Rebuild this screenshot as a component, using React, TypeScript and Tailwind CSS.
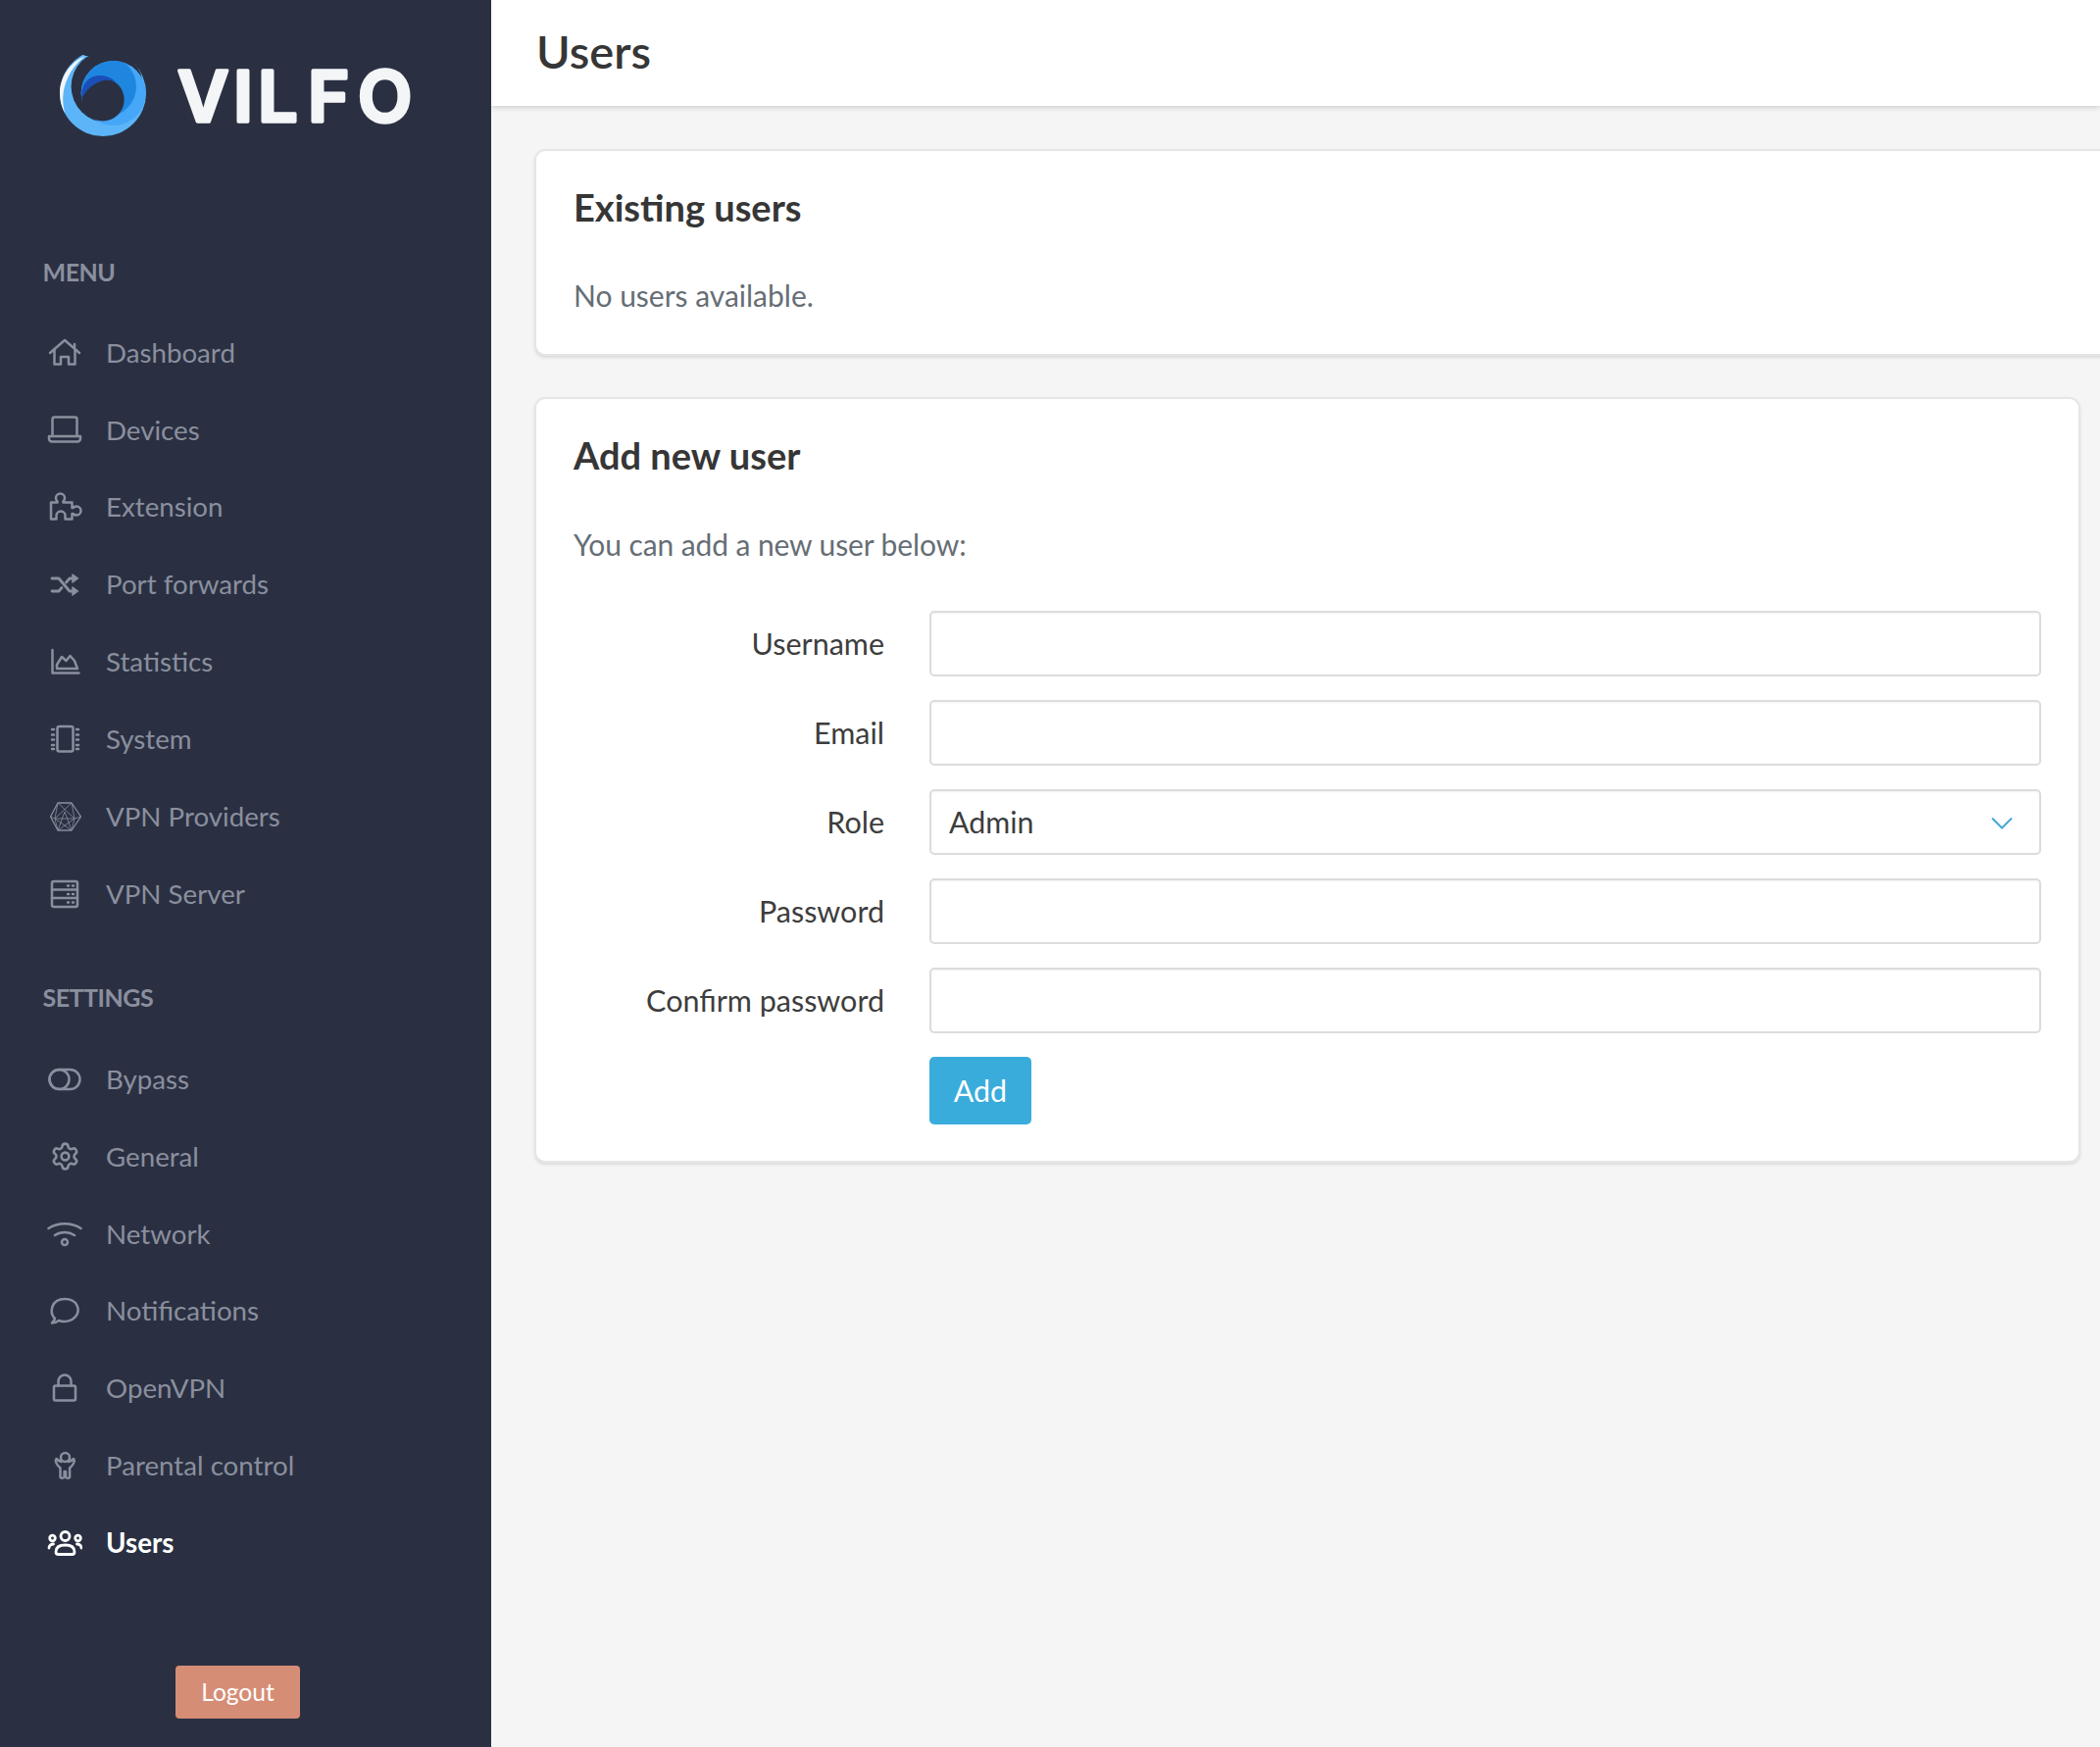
import { ReactNode } from 'react';
import { Settings } from 'lucide-react';

const stroke = {
  fill: 'none',
  stroke: 'currentColor',
  strokeWidth: 2.5,
  strokeLinecap: 'round' as const,
  strokeLinejoin: 'round' as const,
};

function Icon({ children }: { children: ReactNode }) {
  return (
    <svg viewBox="0 0 36 36" className="w-9 h-9 shrink-0" {...stroke}>
      {children}
    </svg>
  );
}

const icons: Record<string, ReactNode> = {
  Dashboard: (
    <Icon>
      <path d="M3 19 18 6l15 13" />
      <path d="M7.500 16v14.500h6.500v-7.500h8v7.500h6.500V16" />
      <path d="M28 10v4" />
    </Icon>
  ),
  Devices: (
    <Icon>
      <path d="M5.500 24V7.500a2 2 0 0 1 2-2h21a2 2 0 0 1 2 2V24" />
      <path d="M2 25h32v2.500a3 3 0 0 1-3 3H5a3 3 0 0 1-3-3z" />
    </Icon>
  ),
  Extension: (
    <Icon>
      <path d="M4 13.500h6.500v-1c-1-1-1.500-2-1.500-3.500a4.500 4.500 0 0 1 9 0c0 1.500-.5 2.500-1.500 3.500v1h9v5.500h1c1-1 2-1.500 3.500-1.500a4.500 4.500 0 0 1 0 9c-1.500 0-2.500-.5-3.500-1.500h-1v5.500H18.500v-3.500a4.500 4.500 0 0 0-9 0v3.500H4z" />
    </Icon>
  ),
  'Port forwards': (
    <Icon>
      <path d="M5 12h7l11 13h3" strokeWidth={2.8} />
      <path d="M5 25h7l3-3.500" strokeWidth={2.8} />
      <path d="M19.500 16l3.500-4h3" strokeWidth={2.8} />
      <path d="M26 8l5.500 4-5.500 4zM26 21l5.500 4-5.500 4z" fill="currentColor" strokeWidth={1.500} />
    </Icon>
  ),
  Statistics: (
    <Icon>
      <path d="M5.500 6v23.500h27" />
      <path d="M10 25v-4l5-8 4.500 4 4-5 4.500 5 3 8z" />
    </Icon>
  ),
  System: (
    <Icon>
      <rect x="10.500" y="5" width="16" height="25.500" rx="2" />
      <path d="M5 8h2M5 13.500h2M5 18.500h2M5 24h2M5 28h2M30 8h2M30 13.500h2M30 18.500h2M30 24h2M30 28h2" />
    </Icon>
  ),
  'VPN Providers': (
    <svg viewBox="0 0 36 36" className="w-9 h-9 shrink-0" fill="none" stroke="currentColor" strokeWidth={0.8} strokeLinejoin="round">
      <path strokeWidth={1.300} d="M11 4h14l9.500 14L25 32H11L3.500 18z" />
      <path d="M11 4 8 20l3 12M25 4l3 16-3 12M3.500 18 8 20l20 0 6.500-2M11 4l17 16L11 32M25 4 8 20l17 12M18 13l-7 19M18 13l7 19" />
    </svg>
  ),
  'VPN Server': (
    <Icon>
      <rect x="5" y="5" width="26" height="26" rx="2" />
      <path d="M5 13.500h26M5 22h26" />
      <path d="M21 9.500h1M26 9.500h1M21 18h1M26 18h1M21 26.500h1M26 26.500h1" />
    </Icon>
  ),
  Bypass: (
    <Icon>
      <rect x="2.500" y="8" width="31" height="20" rx="10" />
      <circle cx="12.500" cy="18" r="10" />
    </Icon>
  ),
  General: (
    <span className="w-9 h-9 shrink-0 flex items-center justify-center">
      <Settings size={31} strokeWidth={2} />
    </span>
  ),
  Network: (
    <Icon>
      <path d="M1.500 13c9.500-6.500 23.500-6.500 33 0" />
      <path d="M8 20c6-4 14-4 20 0" />
      <circle cx="18" cy="27" r="3" />
    </Icon>
  ),
  Notifications: (
    <Icon>
      <path d="M8 26C2 20 4 6 18 6c14 0 16 12 11 18-4 5-12 6-17 4-2 1.500-4 2.500-7 2.500 1.500-1.500 2.500-3 3-4.500z" />
    </Icon>
  ),
  OpenVPN: (
    <Icon>
      <rect x="7" y="15.500" width="22" height="15" rx="1.500" />
      <path d="M11.500 15.500V11a6.500 6.500 0 0 1 13 0v4.500" />
    </Icon>
  ),
  'Parental control': (
    <Icon>
      <circle cx="18.500" cy="9.500" r="4.500" />
      <path d="M14.500 14c-1.500-.5-3.500-1.500-5-3-1.500 2.500-1 5 4 9.500v9c0 1.500 3.800 1.500 4.100 0V24h1.400v5.500c.3 1.500 4.100 1.500 4.100 0v-9c5-4.500 5.500-7 4-9.500-1.500 1.500-3.500 2.500-5 3" />
    </Icon>
  ),
  Users: (
    <svg viewBox="0 0 36 36" className="w-9 h-9 shrink-0" fill="none" stroke="currentColor" strokeWidth={2.800} strokeLinecap="round" strokeLinejoin="round">
      <circle cx="18.500" cy="11" r="4.500" />
      <circle cx="5.500" cy="13" r="2.800" />
      <circle cx="31.500" cy="13" r="2.800" />
      <path d="M9 27c0-4.500 3-7 9.500-7s9.500 2.500 9.500 7c0 1.800-1 2.500-2.500 2.500h-14C10 29.500 9 28.800 9 27z" />
      <path d="M2 23c0-2.500 2-4 4.500-4M35 23c0-2.500-2-4-4.500-4" />
    </svg>
  ),
};

const menu = ['Dashboard', 'Devices', 'Extension', 'Port forwards', 'Statistics', 'System', 'VPN Providers', 'VPN Server'];
const settings = ['Bypass', 'General', 'Network', 'Notifications', 'OpenVPN', 'Parental control', 'Users'];

function NavItem({ label }: { label: string }) {
  const active = label === 'Users';
  return (
    <div className={`flex items-center h-[78.900px] pl-[48px] gap-[24px] text-[27.700px] ${active ? 'text-white font-bold' : 'text-[#8a8f9e]'}`}>
      {icons[label]}
      <span>{label}</span>
    </div>
  );
}

function Logo() {
  return (
    <svg width="400" height="110" viewBox="50 45 400 110" className="block">
      <defs>
        <clipPath id="disc">
          <circle cx="115.700" cy="95" r="33" />
        </clipPath>
      </defs>
      <circle cx="105" cy="95" r="44" fill="#5cb5f8" />
      <circle cx="109.300" cy="88.300" r="36.700" fill="#2a3042" />
      <path d="M87 57 160 57V40H60z" fill="#2a3042" />
      <path d="M87 57C70 64 61 80 61 95c0 8 2 15 5.500 21C60 95 68 72 87 57z" fill="#f4f5f7" />
      <circle cx="115.700" cy="95" r="33" fill="#46a6f7" />
      <circle cx="108.300" cy="88.300" r="30.700" fill="#1f86e0" clipPath="url(#disc)" />
      <circle cx="105" cy="101.700" r="21.700" fill="#2a3042" />
      <path d="M83.500 100C82 85 92 76 103 77c7 .5 12 3 15 7-10-6-26 0-34.500 16z" fill="#1a4fb8" />
      <text
        x="181 238 263 314 365"
        y="124"
        fontFamily="Inter, sans-serif"
        fontWeight={600}
        fontSize={72}
        fill="#f4f5f7"
        stroke="#f4f5f7"
        strokeWidth={3.500}
        strokeLinejoin="round"
      >
        VILFO
      </text>
    </svg>
  );
}

function Field({ label, children }: { label: string; children: ReactNode }) {
  return (
    <div className="flex items-center gap-[46px]">
      <label className="w-[317px] text-right text-[30.500px] text-[#3d3d3d]">{label}</label>
      <div className="flex-1 relative">{children}</div>
    </div>
  );
}

const inputClass =
  'w-full h-[67px] bg-white border-2 border-[#dcdcdc] rounded-[5px] px-[18px] text-[30.400px] text-[#3d3d3d] outline-none appearance-none shadow-[inset_0_1px_2px_rgba(10,10,10,0.05)]';

const cardClass =
  'bg-white border-2 border-[#e6e6e6] rounded-[11px] shadow-[0_2px_3px_rgba(10,10,10,0.1)] px-[38px] shrink-0';

export default function App() {
  return (
    <div className="flex w-[2142px] h-[1782px] overflow-hidden bg-[#f5f5f5] font-['Lato',sans-serif]">
      <aside className="w-[501px] shrink-0 bg-[#2a3042] flex flex-col">
        <div className="h-[258px] pt-[45px] pl-[50px] shrink-0">
          <Logo />
        </div>
        <div className="pl-[43.500px] h-[40px] mb-[22px] flex items-center text-[25px] font-bold text-[#8a8f9e] tracking-[-0.5px]">MENU</div>
        {menu.map((m) => (
          <NavItem key={m} label={m} />
        ))}
        <div className="pl-[43.500px] h-[40px] mt-[47px] mb-[23px] flex items-center text-[25px] font-bold text-[#8a8f9e] tracking-[-0.5px]">SETTINGS</div>
        {settings.map((s) => (
          <NavItem key={s} label={s} />
        ))}
        <div className="mt-auto mb-[29px] pl-[179px]">
          <button className="w-[127px] h-[54px] bg-[#d68d76] text-white text-[24.600px] rounded-[4px]">Logout</button>
        </div>
      </aside>

      <main className="flex-1 min-w-0 overflow-hidden">
        <header className="h-[108px] bg-white flex items-center pl-[46px] pb-[3px] shadow-[0_2px_5px_rgba(10,10,10,0.15)]">
          <h1 className="text-[47px] font-semibold text-[#363636]">Users</h1>
        </header>
        <div className="pl-[44px] pt-[44px] flex flex-col gap-[42px]">
          <section className={`${cardClass} w-[1700px] h-[211px] pt-[32px]`}>
            <h2 className="text-[38px] font-bold text-[#363636] leading-[50px]">Existing users</h2>
            <p className="mt-[45px] text-[30px] text-[#666e75] leading-[40px]">No users available.</p>
          </section>
          <section className={`${cardClass} w-[1577px] h-[781px] pt-[32px]`}>
            <h2 className="text-[38px] font-bold text-[#363636] leading-[50px]">Add new user</h2>
            <p className="mt-[46px] text-[30px] text-[#666e75] leading-[40px] tracking-[-0.1px]">You can add a new user below:</p>
            <form className="mt-[48px] flex flex-col gap-[24px]">
              <Field label="Username">
                <input className={inputClass} />
              </Field>
              <Field label="Email">
                <input className={inputClass} />
              </Field>
              <Field label="Role">
                <select className={inputClass} defaultValue="Admin">
                  <option>Admin</option>
                  <option>User</option>
                </select>
                <svg viewBox="0 0 22 14" className="absolute right-[29px] top-[28px] w-[22px] h-[14px]" fill="none" stroke="#4aa6d4" strokeWidth={2}>
                  <path d="M1 1.500l10 10 10-10" />
                </svg>
              </Field>
              <Field label="Password">
                <input type="password" className={inputClass} />
              </Field>
              <Field label="Confirm password">
                <input type="password" className={inputClass} />
              </Field>
              <div className="pl-[363px]">
                <button type="button" className="w-[104px] h-[69px] bg-[#3aacdb] text-white text-[30.400px] rounded-[5px]">Add</button>
              </div>
            </form>
          </section>
        </div>
      </main>
    </div>
  );
}
